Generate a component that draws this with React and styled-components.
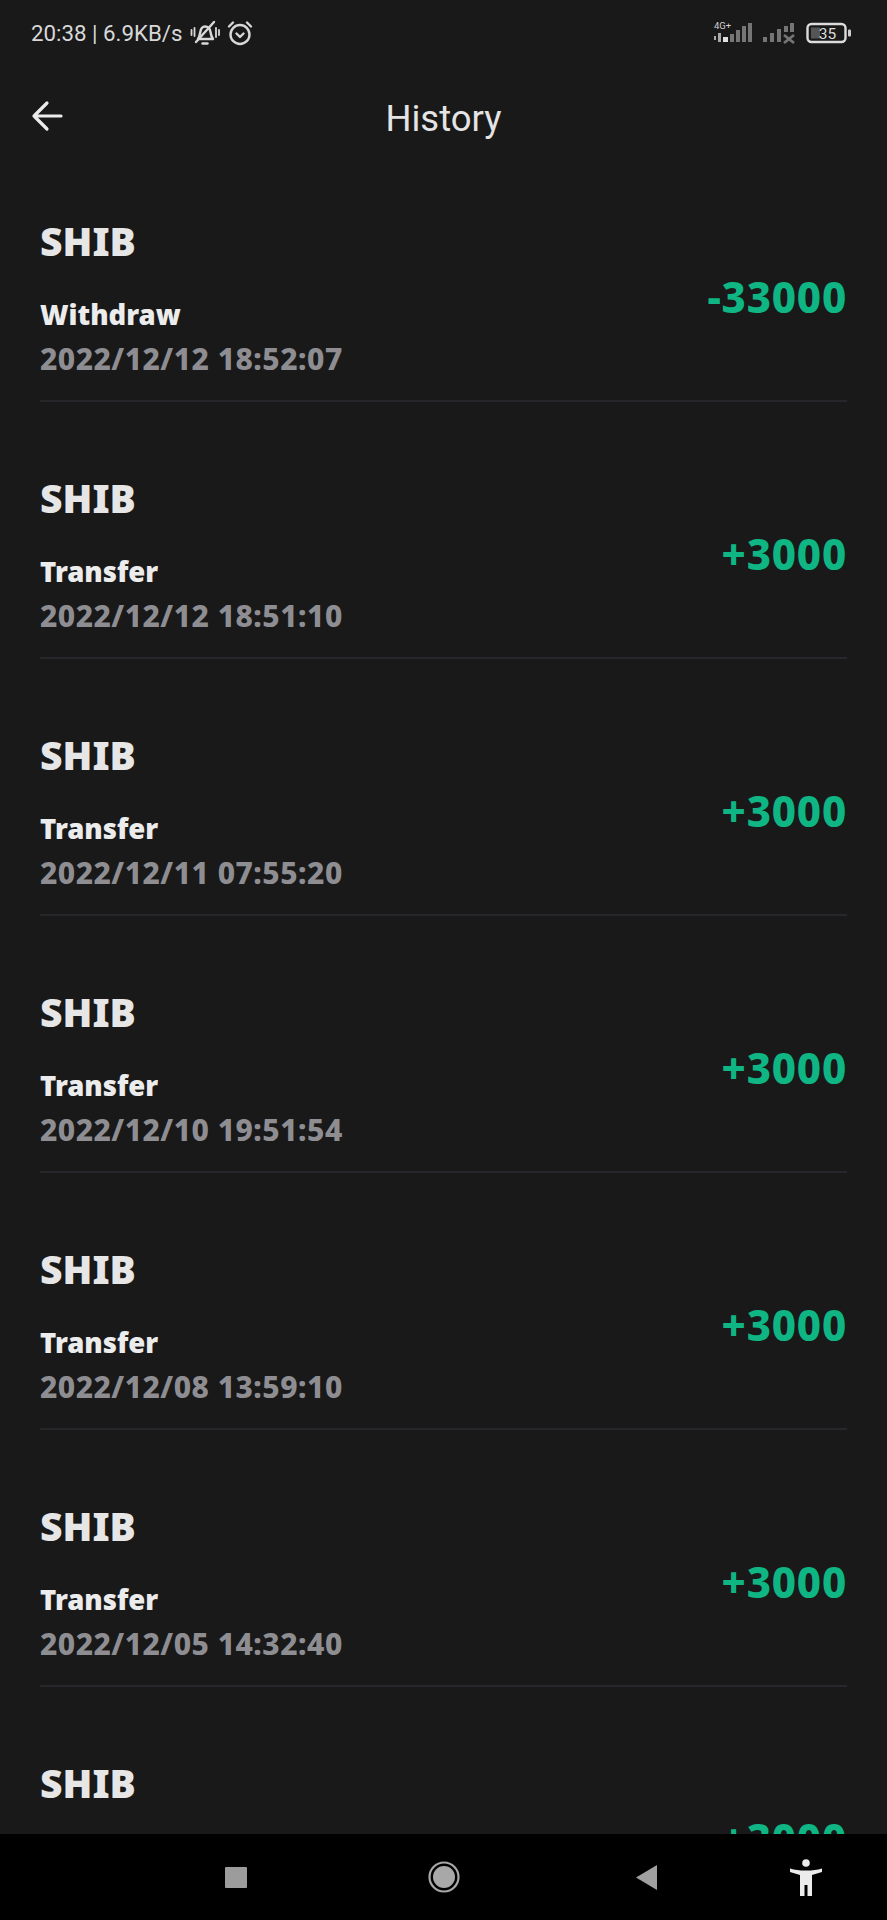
import React from 'react'
import styled, { createGlobalStyle } from 'styled-components'

const GlobalStyle = createGlobalStyle`
  html, body {
    margin: 0;
    padding: 0;
    background: #19191a;
  }
`

const Page = styled.div`
  width: 887px;
  height: 1920px;
  display: flex;
  flex-direction: column;
  background: #19191a;
  overflow: hidden;
`

const StatusBar = styled.div`
  height: 66px;
  flex: none;
  padding: 0 35px 0 31px;
  box-sizing: border-box;
  display: flex;
  justify-content: space-between;
  align-items: center;
  font-family: Roboto, sans-serif;
  font-size: 22.3px;
  color: #d8d8d8;
`

const StatusLeft = styled.div`
  display: flex;
  align-items: center;
  gap: 7px;
`

const StatusRight = styled.div`
  display: flex;
  align-items: center;
  gap: 8px;
`

const Header = styled.header`
  height: 104px;
  flex: none;
  position: relative;
  display: flex;
  align-items: center;
  justify-content: center;
`

const BackButton = styled.div`
  position: absolute;
  left: 31px;
  top: 33px;
  display: flex;
`

const Title = styled.h1`
  margin: 0;
  font-family: Roboto, sans-serif;
  font-size: 36.5px;
  font-weight: 400;
  color: #e4e4e4;
`

const List = styled.main`
  flex: 1;
  min-height: 0;
  overflow: hidden;
  padding: 0 40px;
`

const Row = styled.div`
  height: 257px;
  box-sizing: border-box;
  border-bottom: 2px solid #27272b;
  padding-top: 70px;
  display: flex;
  justify-content: space-between;
  align-items: flex-start;
  &:first-child {
    height: 232px;
    padding-top: 45px;
  }
`

const Info = styled.div`
  display: flex;
  flex-direction: column;
`

const Coin = styled.div`
  font-family: 'Noto Sans', sans-serif;
  font-size: 39px;
  font-weight: 900;
  line-height: 52px;
  color: #e6e6e6;
`

const Kind = styled.div`
  margin-top: 30px;
  font-family: 'Noto Sans', sans-serif;
  font-size: 27.5px;
  font-weight: 900;
  line-height: 36px;
  color: #ececec;
`

const Stamp = styled.div`
  margin-top: 8px;
  font-family: 'Noto Sans', sans-serif;
  font-size: 30px;
  font-weight: 800;
  line-height: 36px;
  letter-spacing: 0.5px;
  color: #8e8e92;
`

const Amount = styled.div`
  margin-top: 56px;
  font-family: 'Noto Sans', sans-serif;
  font-size: 42px;
  font-weight: 800;
  line-height: 52px;
  letter-spacing: 0.8px;
  color: #0fb583;
`

const NavBar = styled.nav`
  height: 86px;
  flex: none;
  background: #000;
  padding-left: 225px;
  display: flex;
  align-items: center;
`

const NavSlot = styled.div`
  display: flex;
  margin-left: ${(props) => props.$gap || 0}px;
`

const rows = [
  { kind: 'Withdraw', stamp: '2022/12/12 18:52:07', amount: '-33000' },
  { kind: 'Transfer', stamp: '2022/12/12 18:51:10', amount: '+3000' },
  { kind: 'Transfer', stamp: '2022/12/11 07:55:20', amount: '+3000' },
  { kind: 'Transfer', stamp: '2022/12/10 19:51:54', amount: '+3000' },
  { kind: 'Transfer', stamp: '2022/12/08 13:59:10', amount: '+3000' },
  { kind: 'Transfer', stamp: '2022/12/05 14:32:40', amount: '+3000' },
  { amount: '+3000' },
]

const MuteBell = () => (
  <svg width="30" height="26" viewBox="0 0 30 26" fill="none" stroke="#d8d8d8" strokeWidth="2.4" strokeLinecap="round" strokeLinejoin="round">
    <path d="M8 19c1.500-2 1.800-4 2.300-7 .6-3.500 2.700-5.500 4.700-5.500 3 0 5 2.500 5.500 5.500.4 3 1 5 2.500 7z" />
    <path d="M12.500 23.500h5" />
    <path d="M6 22 24 2" />
    <path d="M1.500 10v5M4.500 8v8M26 8v9M29 10v5" strokeWidth="1.800" />
  </svg>
)

const AlarmClock = () => (
  <svg width="26" height="26" viewBox="0 0 26 26" fill="none" stroke="#d8d8d8" strokeWidth="2.400" strokeLinecap="round" strokeLinejoin="round">
    <circle cx="13" cy="14.500" r="9.500" />
    <path d="M9.500 13.500l3.500 3.500 3.500-3.500" />
    <path d="M2 6.500 6 2.500M24 6.500 20 2.500" />
  </svg>
)

const Signal = () => (
  <svg width="85" height="24" viewBox="0 0 85 24" fill="#757575">
    <text x="1" y="8" fontFamily="Roboto, sans-serif" fontSize="9.500" fill="#cfcfcf">4G+</text>
    <path d="M1 15h2v4H1zM5 12h3v9H5z" fill="#a8a8a8" />
    <path d="M10 16h5v5h-5z" fill="#e0e0e0" />
    <path d="M17 13h4v8h-4zM23 9h4v12h-4zM29 5h4v16h-4zM35 2h4v19h-4z" />
    <path d="M50 16h4v5h-4zM57 12h4v9h-4zM64 8h4v13h-4zM71 5h4v6h-4zM77 2h4v9h-4z" />
    <path d="M71 14l10 8M81 14l-10 8" stroke="#757575" strokeWidth="2.800" fill="none" />
  </svg>
)

const Battery = () => (
  <svg width="46" height="22" viewBox="0 0 46 22">
    <rect x="1.500" y="2" width="38" height="18" rx="4" fill="none" stroke="#dcdcdc" strokeWidth="2.400" />
    <rect x="5" y="5.500" width="9" height="11" fill="#555" />
    <rect x="42" y="7.500" width="3" height="7" rx="1" fill="#cfcfcf" />
    <text x="21.500" y="17" textAnchor="middle" fontFamily="Roboto, sans-serif" fontSize="15.500" fill="#dcdcdc">35</text>
  </svg>
)

const BackArrow = () => (
  <svg width="34" height="34" viewBox="0 0 34 34" fill="none" stroke="#ececec" strokeWidth="3.200" strokeLinecap="round" strokeLinejoin="round">
    <path d="M3 17h27M16 4 3 17l13 13" />
  </svg>
)

const SquareIcon = () => (
  <svg width="22" height="21" viewBox="0 0 22 21">
    <rect width="22" height="21" rx="1" fill="#9c9c9c" />
  </svg>
)

const CircleIcon = () => (
  <svg width="32" height="32" viewBox="0 0 32 32">
    <circle cx="16" cy="16" r="14.500" fill="none" stroke="#a8a8a8" strokeWidth="2.200" />
    <circle cx="16" cy="16" r="11" fill="#a8a8a8" />
  </svg>
)

const TriangleIcon = () => (
  <svg width="21" height="25" viewBox="0 0 21 25">
    <path d="M21 0v25L0 12.500z" fill="#a0a0a0" />
  </svg>
)

const PersonIcon = () => (
  <svg width="32" height="37" viewBox="0 0 32 37" fill="#ececec">
    <circle cx="16" cy="4" r="3.800" />
    <path d="M0 9.500c5 1.500 9 2 16 2s11-.5 16-2v3.500l-10 3V37h-4.500V26h-3v11H10V16L0 13z" />
  </svg>
)

export default function App() {
  return (
    <Page>
      <GlobalStyle />
      <StatusBar>
        <StatusLeft>
          <span>20:38 | 6.9KB/s</span>
          <MuteBell />
          <AlarmClock />
        </StatusLeft>
        <StatusRight>
          <Signal />
          <Battery />
        </StatusRight>
      </StatusBar>
      <Header>
        <BackButton>
          <BackArrow />
        </BackButton>
        <Title>History</Title>
      </Header>
      <List>
        {rows.map((row, i) => (
          <Row key={i}>
            <Info>
              <Coin>SHIB</Coin>
              {row.kind && <Kind>{row.kind}</Kind>}
              {row.stamp && <Stamp>{row.stamp}</Stamp>}
            </Info>
            <Amount>{row.amount}</Amount>
          </Row>
        ))}
      </List>
      <NavBar>
        <NavSlot><SquareIcon /></NavSlot>
        <NavSlot $gap={181}><CircleIcon /></NavSlot>
        <NavSlot $gap={176}><TriangleIcon /></NavSlot>
        <NavSlot $gap={133}><PersonIcon /></NavSlot>
      </NavBar>
    </Page>
  )
}
